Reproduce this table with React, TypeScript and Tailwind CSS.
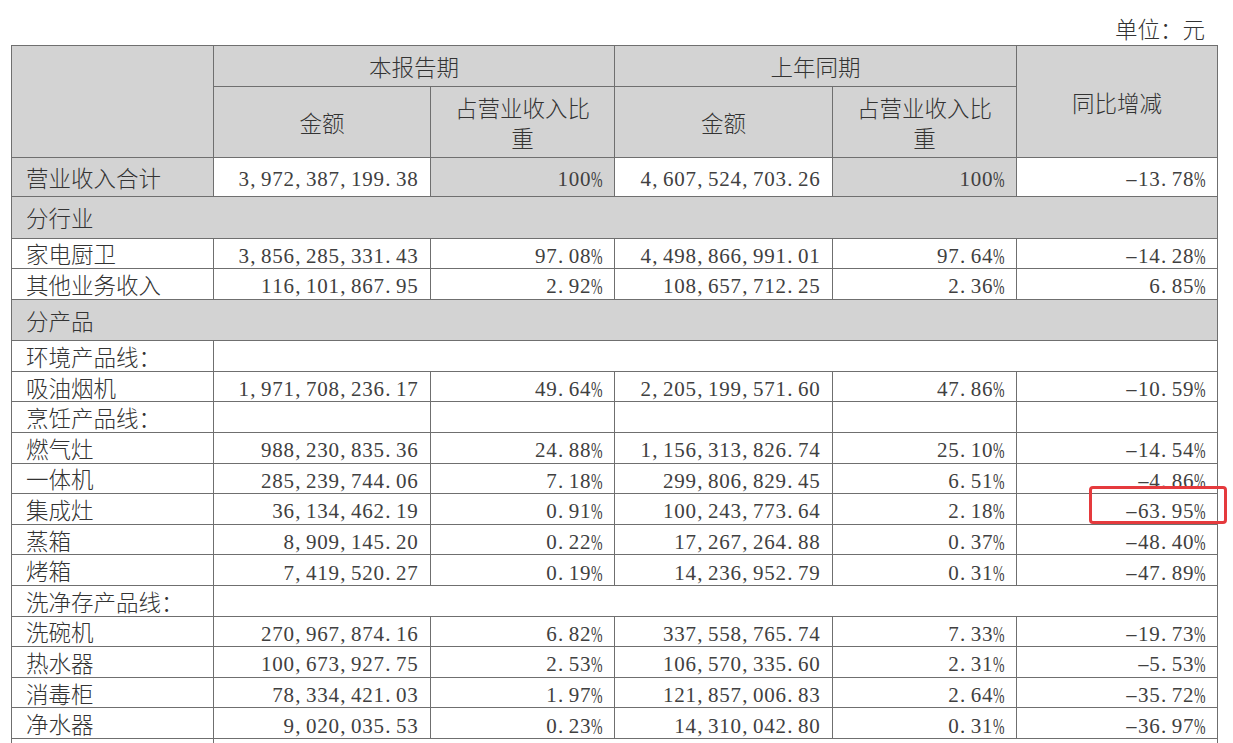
import React from "react";

type DataRow = {
  kind: "data";
  label: string;
  a: string;
  ar: string;
  b: string;
  br: string;
  y: string;
};
type SectionRow = { kind: "section"; label: string };
type SubRow = { kind: "sub"; label: string; split: boolean };
type Row = DataRow | SectionRow | SubRow;

const d = (label: string, a: string, ar: string, b: string, br: string, y: string): DataRow => ({
  kind: "data",
  label,
  a,
  ar,
  b,
  br,
  y,
});

const rows: Row[] = [
  { kind: "section", label: "分行业" },
  d("家电厨卫", "3,856,285,331.43", "97.08%", "4,498,866,991.01", "97.64%", "-14.28%"),
  d("其他业务收入", "116,101,867.95", "2.92%", "108,657,712.25", "2.36%", "6.85%"),
  { kind: "section", label: "分产品" },
  { kind: "sub", label: "环境产品线：", split: false },
  d("吸油烟机", "1,971,708,236.17", "49.64%", "2,205,199,571.60", "47.86%", "-10.59%"),
  { kind: "sub", label: "烹饪产品线：", split: true },
  d("燃气灶", "988,230,835.36", "24.88%", "1,156,313,826.74", "25.10%", "-14.54%"),
  d("一体机", "285,239,744.06", "7.18%", "299,806,829.45", "6.51%", "-4.86%"),
  d("集成灶", "36,134,462.19", "0.91%", "100,243,773.64", "2.18%", "-63.95%"),
  d("蒸箱", "8,909,145.20", "0.22%", "17,267,264.88", "0.37%", "-48.40%"),
  d("烤箱", "7,419,520.27", "0.19%", "14,236,952.79", "0.31%", "-47.89%"),
  { kind: "sub", label: "洗净存产品线：", split: false },
  d("洗碗机", "270,967,874.16", "6.82%", "337,558,765.74", "7.33%", "-19.73%"),
  d("热水器", "100,673,927.75", "2.53%", "106,570,335.60", "2.31%", "-5.53%"),
  d("消毒柜", "78,334,421.03", "1.97%", "121,857,006.83", "2.64%", "-35.72%"),
  d("净水器", "9,020,035.53", "0.23%", "14,310,042.80", "0.31%", "-36.97%"),
  { kind: "sub", label: "", split: false },
];

function Num({ v }: { v: string }) {
  return (
    <span className="inline-flex align-middle font-['Liberation_Serif',serif] text-[21px] leading-[24px] text-[#404040]">
      {[...v].map((c, i) => {
        if (c === "%")
          return (
            <span key={i} className="inline-flex w-[11.25px] justify-center">
              <span className="inline-block scale-x-[0.66] scale-y-[1.08]">%</span>
            </span>
          );
        if (c === "-")
          return (
            <span key={i} className="inline-flex w-[11.25px] justify-center">
              <span className="inline-block scale-x-[1.9] scale-y-[0.8]">-</span>
            </span>
          );
        if (c === "," || c === ".")
          return (
            <span key={i} className="inline-flex w-[11.25px] justify-start pl-[1px]">
              {c}
            </span>
          );
        return (
          <span key={i} className="inline-flex w-[11.25px] justify-center">
            {c}
          </span>
        );
      })}
    </span>
  );
}

const cell = "border border-[#6f6f6f] p-0 leading-[26px]";
const gray = "bg-[#d3d3d3]";
const labelCls = `${cell} pl-[14px] text-left align-middle`;
const numCls = `${cell} pr-[12px] text-right align-middle`;

export default function App() {
  return (
    <div className="relative h-[743px] w-[1233px] overflow-hidden bg-white font-['Noto_Sans_CJK_SC','Noto_Sans',sans-serif] text-[22.5px] font-light text-[#333] pt-[13px]">
      <div className="ml-[11px] w-[1206px]">
        <div className="h-[30px] pr-[12px] text-right leading-[30px]">单位：元</div>
        <table className="mt-[2px] w-[1206px] table-fixed border-collapse">
          <colgroup>
            <col className="w-[202px]" />
            <col className="w-[217px]" />
            <col className="w-[184px]" />
            <col className="w-[218px]" />
            <col className="w-[184px]" />
            <col className="w-[201px]" />
          </colgroup>
          <thead>
            <tr className="h-[41px]">
              <th rowSpan={2} className={`${cell} ${gray} font-light`}></th>
              <th colSpan={2} className={`${cell} ${gray} font-light`}>
                本报告期
              </th>
              <th colSpan={2} className={`${cell} ${gray} font-light`}>
                上年同期
              </th>
              <th rowSpan={2} className={`${cell} ${gray} font-light`}>
                同比增减
              </th>
            </tr>
            <tr className="h-[71px]">
              <th className={`${cell} ${gray} font-light`}>金额</th>
              <th className={`${cell} ${gray} font-light !leading-[30px]`}>
                占营业收入比
                <br />重
              </th>
              <th className={`${cell} ${gray} font-light`}>金额</th>
              <th className={`${cell} ${gray} font-light !leading-[30px]`}>
                占营业收入比
                <br />重
              </th>
            </tr>
          </thead>
          <tbody>
            <tr className="h-[39px]">
              <td className={`${labelCls} ${gray}`}>营业收入合计</td>
              <td className={`${numCls} bg-white`}>
                <Num v="3,972,387,199.38" />
              </td>
              <td className={`${numCls} ${gray}`}>
                <Num v="100%" />
              </td>
              <td className={`${numCls} bg-white`}>
                <Num v="4,607,524,703.26" />
              </td>
              <td className={`${numCls} ${gray}`}>
                <Num v="100%" />
              </td>
              <td className={`${numCls} bg-white`}>
                <Num v="-13.78%" />
              </td>
            </tr>
            {rows.map((r, i) => {
              if (r.kind === "section")
                return (
                  <tr key={i} className="h-[41.5px]">
                    <td colSpan={6} className={`${labelCls} ${gray}`}>
                      {r.label}
                    </td>
                  </tr>
                );
              if (r.kind === "sub")
                return (
                  <tr key={i} className="h-[30.6px]">
                    <td className={labelCls}>{r.label}</td>
                    {r.split ? (
                      <>
                        <td className={cell}></td>
                        <td className={cell}></td>
                        <td className={cell}></td>
                        <td className={cell}></td>
                        <td className={cell}></td>
                      </>
                    ) : (
                      <td colSpan={5} className={cell}></td>
                    )}
                  </tr>
                );
              return (
                <tr key={i} className="h-[30.6px]">
                  <td className={labelCls}>{r.label}</td>
                  <td className={numCls}>
                    <Num v={r.a} />
                  </td>
                  <td className={numCls}>
                    <Num v={r.ar} />
                  </td>
                  <td className={numCls}>
                    <Num v={r.b} />
                  </td>
                  <td className={numCls}>
                    <Num v={r.br} />
                  </td>
                  <td className={numCls}>
                    <Num v={r.y} />
                  </td>
                </tr>
              );
            })}
          </tbody>
        </table>
      </div>
      <div className="absolute left-[1089px] top-[486px] h-[38px] w-[138px] rounded-[4px] border-[3px] border-[#e53a3d]"></div>
    </div>
  );
}
